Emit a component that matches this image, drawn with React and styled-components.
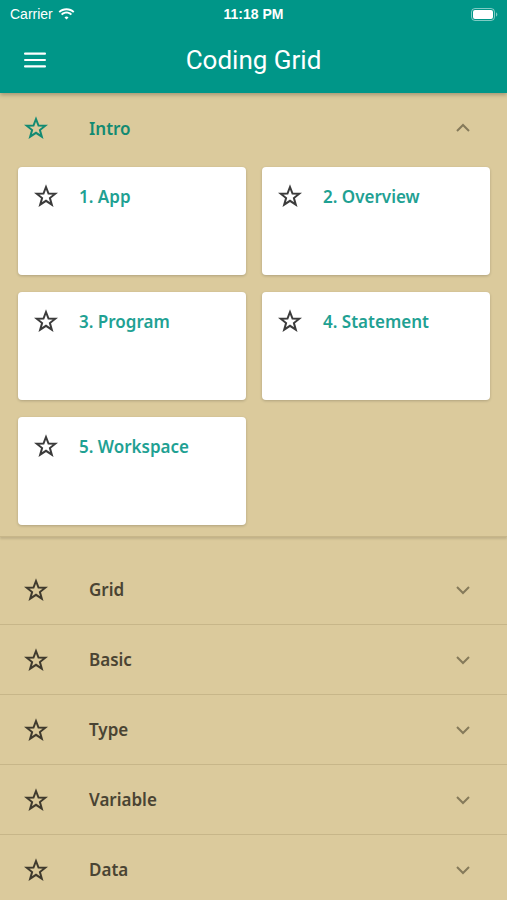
import React from 'react';
import styled, {createGlobalStyle} from 'styled-components';

const GlobalStyle = createGlobalStyle`
    body {
        margin: 0;
        background: #dbca9c;
        font-family: "Noto Sans", "Open Sans", sans-serif;
    }
`

const Page = styled.div`
    width: 507px;
    height: 900px;
    overflow: hidden;
    background: #dbca9c;
`

const AppBar = styled.header`
    background: #009688;
    color: white;
    box-shadow: 0 2px 4px rgba(0,0,0,0.25);
    position: relative;
    z-index: 2;
`

const StatusBar = styled.div`
    height: 28px;
    display: flex;
    align-items: center;
    justify-content: space-between;
    padding: 0 9px 0 10px;
    font-family: "Liberation Sans", Arial, sans-serif;
    font-size: 14px;
    position: relative;
`

const Carrier = styled.div`
    display: flex;
    align-items: center;
    gap: 5px;
`

const Clock = styled.div`
    position: absolute;
    left: 0;
    right: 0;
    text-align: center;
    font-weight: bold;
    pointer-events: none;
`

const Toolbar = styled.div`
    height: 65px;
    display: flex;
    align-items: center;
    padding: 0 24px 2px;
    box-sizing: border-box;
    position: relative;
`

const Title = styled.h1`
    position: absolute;
    left: 0;
    right: 0;
    margin: 0;
    text-align: center;
    font-family: Roboto, sans-serif;
    font-weight: 400;
    font-size: 26px;
    pointer-events: none;
`

const Panel = styled.section`
    border-bottom: 1px solid #c7b689;
    box-shadow: ${props => props.open ? '0 2px 2px rgba(0,0,0,0.12)' : 'none'};
    margin-bottom: ${props => props.open ? '18px' : '0'};
`

const PanelHeader = styled.div`
    height: ${props => props.open ? '70px' : '69px'};
    display: flex;
    align-items: center;
    padding: 0 36px 0 24px;
`

const PanelTitle = styled.span`
    flex: 1;
    margin-left: 41px;
    font-size: 17px;
    font-weight: 600;
    color: ${props => props.open ? '#128a72' : '#4a4433'};
`

const CardGrid = styled.div`
    display: grid;
    grid-template-columns: 1fr 1fr;
    gap: 17px 16px;
    padding: 4px 17px 11px 18px;
`

const Card = styled.div`
    background: white;
    height: 108px;
    border-radius: 4px;
    box-shadow: 0 1px 3px rgba(0,0,0,0.2);
    display: flex;
    align-items: flex-start;
    padding: 17px 16px;
    box-sizing: border-box;
`

const CardTitle = styled.span`
    margin-left: 21px;
    margin-top: 1px;
    font-size: 17px;
    font-weight: 600;
    color: #1fa193;
`

function Star({color}){
    return (
        <svg width="24" height="24" viewBox="0 0 24 24" fill="none" stroke={color} strokeWidth="2" strokeLinejoin="miter">
            <polygon points="12,3 14.5,9.5 21.3,9.7 15.9,14 17.8,20.6 12,16.8 6.2,20.6 8.1,14 2.7,9.7 9.5,9.5"/>
        </svg>
    )
}

function Chevron({up}){
    return (
        <svg width="16" height="10" viewBox="0 0 16 10" fill="none" stroke="#857a5a" strokeWidth="2">
            <polyline points={up ? "2,8 8,2 14,8" : "2,2 8,8 14,2"}/>
        </svg>
    )
}

const lessons = ["1. App", "2. Overview", "3. Program", "4. Statement", "5. Workspace"];
const sections = ["Grid", "Basic", "Type", "Variable", "Data"];

function App(){
    return (
        <Page>
            <GlobalStyle/>
            <AppBar>
                <StatusBar>
                    <Carrier>
                        Carrier
                        <svg width="17" height="12" viewBox="0 0 17 12" fill="white">
                            <path d="M8.5 2.2c2.6 0 4.9 1 6.6 2.6l1.3-1.3C14.4 1.5 11.6.3 8.5.3S2.6 1.5.6 3.5l1.3 1.3C3.6 3.2 5.9 2.2 8.5 2.2z"/>
                            <path d="M8.5 5.5c1.6 0 3.1.6 4.2 1.7L14 5.9c-1.5-1.4-3.4-2.3-5.5-2.3S4.5 4.5 3 5.9l1.3 1.3c1.1-1.1 2.6-1.7 4.2-1.7z"/>
                            <path d="M8.5 8.6c.8 0 1.5.3 2 .8L8.5 11.5 6.5 9.4c.5-.5 1.200-.8 2-.8z"/>
                        </svg>
                    </Carrier>
                    <Clock>11:18 PM</Clock>
                    <svg width="27" height="13" viewBox="0 0 27 13">
                        <rect x="0.5" y="0.5" width="23" height="12" rx="3.5" fill="none" stroke="rgba(255,255,255,0.5)"/>
                        <rect x="2" y="2" width="20" height="9" rx="2" fill="white"/>
                        <path d="M25 4.5v4c.8-.3 1.3-1.1 1.3-2s-.5-1.7-1.3-2z" fill="rgba(255,255,255,0.5)"/>
                    </svg>
                </StatusBar>
                <Toolbar>
                    <svg width="22" height="16" viewBox="0 0 22 16" fill="white">
                        <rect x="0" y="0.5" width="22" height="2.2" rx="1"/>
                        <rect x="0" y="6.9" width="22" height="2.2" rx="1"/>
                        <rect x="0" y="13.3" width="22" height="2.2" rx="1"/>
                    </svg>
                    <Title>Coding Grid</Title>
                </Toolbar>
            </AppBar>

            <Panel open>
                <PanelHeader open>
                    <Star color="#128a72"/>
                    <PanelTitle open>Intro</PanelTitle>
                    <Chevron up/>
                </PanelHeader>
                <CardGrid>
                    {lessons.map(name =>
                    <Card key={name}>
                        <Star color="#3b3b3b"/>
                        <CardTitle>{name}</CardTitle>
                    </Card>)}
                </CardGrid>
            </Panel>

            {sections.map(name =>
            <Panel key={name}>
                <PanelHeader>
                    <Star color="#3f3a2d"/>
                    <PanelTitle>{name}</PanelTitle>
                    <Chevron/>
                </PanelHeader>
            </Panel>)}
        </Page>
    )
}

export default App;
